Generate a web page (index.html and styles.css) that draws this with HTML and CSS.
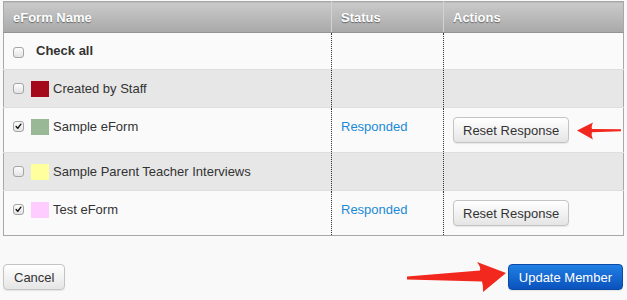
FILE: index.html
```html
<!DOCTYPE html>
<html>
<head>
<meta charset="utf-8">
<link rel="stylesheet" href="styles.css">
</head>
<body>
<div class="page">
  <table class="grid">
    <colgroup><col class="w-name"><col class="w-status"><col class="w-actions"></colgroup>
    <thead>
      <tr><th>eForm Name</th><th class="sep">Status</th><th class="sep">Actions</th></tr>
    </thead>
    <tbody>
      <tr>
        <td><div class="name"><span class="cb cb-all"></span><strong class="checkall">Check all</strong></div></td>
        <td class="sep"></td><td class="sep"></td>
      </tr>
      <tr class="alt">
        <td><div class="name"><span class="cb"></span><span class="swatch red"></span><span>Created by Staff</span></div></td>
        <td class="sep"></td><td class="sep"></td>
      </tr>
      <tr>
        <td><div class="name"><span class="cb checked"><svg viewBox="0 0 11 11"><path d="M2.6 5.6 L4.6 7.8 L8.4 2.6" fill="none" stroke="#111" stroke-width="1.7" stroke-linecap="round" stroke-linejoin="round"/></svg></span><span class="swatch green"></span><span>Sample eForm</span></div></td>
        <td class="sep"><span class="status">Responded</span></td>
        <td class="sep act"><button class="btn">Reset Response</button></td>
      </tr>
      <tr class="alt">
        <td><div class="name"><span class="cb"></span><span class="swatch yellow"></span><span>Sample Parent Teacher Interviews</span></div></td>
        <td class="sep"></td><td class="sep"></td>
      </tr>
      <tr>
        <td><div class="name"><span class="cb checked"><svg viewBox="0 0 11 11"><path d="M2.6 5.6 L4.6 7.8 L8.4 2.6" fill="none" stroke="#111" stroke-width="1.7" stroke-linecap="round" stroke-linejoin="round"/></svg></span><span class="swatch pink"></span><span>Test eForm</span></div></td>
        <td class="sep"><span class="status">Responded</span></td>
        <td class="sep act"><button class="btn">Reset Response</button></td>
      </tr>
    </tbody>
  </table>
  <div class="footer">
    <button class="btn">Cancel</button>
    <button class="btn btn-primary">Update Member</button>
  </div>
  <svg class="arrow arrow-small" width="48" height="20" viewBox="0 0 48 20">
    <path d="M2,9.5 L18,1.5 Q16,6 17,8 L46,8.2 L46,10.2 L17,11.2 Q16,14 18,18.5 Z" fill="#f2271d"/>
  </svg>
  <svg class="arrow arrow-big" width="104" height="38" viewBox="0 0 104 38">
    <path d="M101,15 L72,4 Q76,9 75,12.5 L2,18.5 L2,21.5 L77,23.5 Q78.5,28 78,34 Z" fill="#f2271d"/>
  </svg>
</div>
</body>
</html>
```

FILE: styles.css
```css
* { box-sizing: border-box; }
html, body { margin: 0; padding: 0; background: #f9f9f9; }
body {
  font-family: "Liberation Sans", Arial, Helvetica, sans-serif;
  font-size: 13px;
  line-height: 17px;
  color: #333;
  width: 627px;
  height: 300px;
  overflow: hidden;
}
.page { position: relative; padding: 1px 4px 0 3px; }

.grid {
  width: 620px;
  border-collapse: collapse;
  table-layout: fixed;
  border: 1px solid #a8a8a8;
}
.w-name { width: 328px; }
.w-status { width: 112px; }
.w-actions { width: 180px; }

.grid th {
  height: 31px;
  padding: 0 9px;
  text-align: left;
  font-weight: bold;
  color: #fff;
  text-shadow: 0 1px 1px rgba(0,0,0,0.45);
  background: linear-gradient(#cacaca, #a9a9a9);
  border-bottom: 1px solid #939393;
}
.grid th.sep { border-left: 1px solid #d2d2d2; }

.grid td {
  padding: 10px 9px;
  vertical-align: top;
  background: #fafafa;
  border-top: 1px solid #dedede;
}
.grid tr.alt td { background: #e7e7e7; }
.grid td.sep { border-left: 1px dotted #333; }
.grid td.act { padding: 9px 9px; }

.name { display: flex; align-items: center; }
.cb {
  width: 11px;
  height: 11px;
  border: 1px solid #a5a5a5;
  border-radius: 3px;
  background: linear-gradient(#fdfdfd, #e3e3e3);
  margin-right: 7px;
  display: inline-flex;
  flex: none;
}
.cb-all { margin-top: 3px; }
.cb svg { width: 9px; height: 9px; }
.checkall { margin-left: 5px; margin-top: -1px; }
.swatch { width: 18px; height: 16px; margin-right: 4px; flex: none; }
.red { background: #a3081b; }
.green { background: #98b896; }
.yellow { background: #ffff9d; }
.pink { background: #ffccff; }

.status { color: #1a8ad6; }

.btn {
  height: 26px;
  padding: 0 10px;
  border: 1px solid #c4c4c4;
  border-radius: 4px;
  background: linear-gradient(#ffffff, #e5e5e5);
  box-shadow: 0 1px 1px rgba(0,0,0,0.08);
  font-family: "Liberation Sans", Arial, sans-serif;
  font-size: 13px;
  color: #333;
}
.grid .btn { padding: 0 9px; }
.btn-primary {
  background: linear-gradient(#2180e4, #0a52bd);
  border-color: #0b4aa5;
  color: #fff;
}

.footer {
  display: flex;
  justify-content: space-between;
  margin-top: 28px;
}

.arrow { position: absolute; }
.arrow-small { left: 575px; top: 121px; }
.arrow-big { left: 405px; top: 258px; }
```
